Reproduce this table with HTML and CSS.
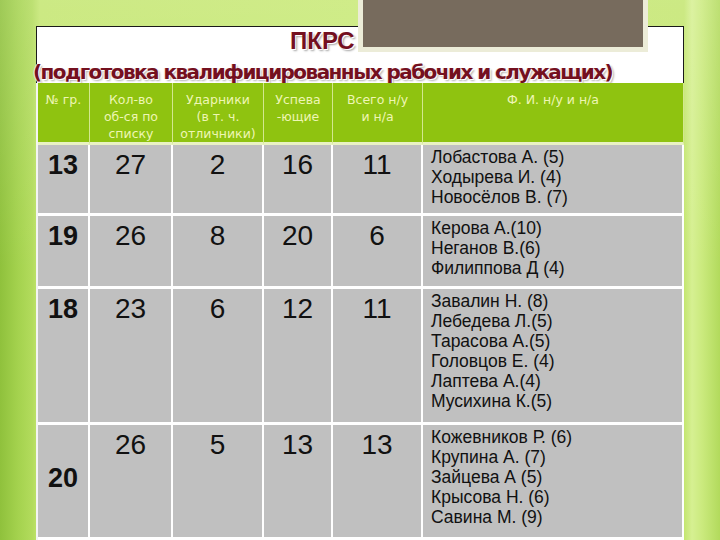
FILE: index.html
```html
<!DOCTYPE html>
<html lang="ru">
<head>
<meta charset="utf-8">
<title>ПКРС</title>
<link rel="stylesheet" href="styles.css">
</head>
<body>
<div class="slide">
  <div class="photo"></div>
  <div class="titlebox">
    <h1 class="title">ПКРС</h1>
    <p class="subtitle">(подготовка квалифицированных рабочих и служащих)</p>
  </div>
  <table class="grid">
    <thead>
      <tr class="head">
        <th class="c1">№ гр.</th>
        <th class="c2">Кол-во<br>об-ся по<br>списку</th>
        <th class="c3">Ударники<br>(в т. ч.<br>отличники)</th>
        <th class="c4">Успева<br>-ющие</th>
        <th class="c5">Всего н/у<br>и н/а</th>
        <th class="c6">Ф. И. н/у и н/а</th>
      </tr>
    </thead>
    <tbody>
      <tr class="r1">
        <td class="grp">13</td>
        <td class="num">27</td>
        <td class="num">2</td>
        <td class="num">16</td>
        <td class="num">11</td>
        <td class="names">Лобастова А. (5)<br>Ходырева И. (4)<br>Новосёлов В. (7)</td>
      </tr>
      <tr class="r2">
        <td class="grp">19</td>
        <td class="num">26</td>
        <td class="num">8</td>
        <td class="num">20</td>
        <td class="num">6</td>
        <td class="names">Керова А.(10)<br>Неганов В.(6)<br>Филиппова Д (4)</td>
      </tr>
      <tr class="r3">
        <td class="grp">18</td>
        <td class="num">23</td>
        <td class="num">6</td>
        <td class="num">12</td>
        <td class="num">11</td>
        <td class="names">Завалин Н. (8)<br>Лебедева Л.(5)<br>Тарасова А.(5)<br>Головцов Е. (4)<br>Лаптева А.(4)<br>Мусихина К.(5)</td>
      </tr>
      <tr class="r4">
        <td class="grp mid">20</td>
        <td class="num">26</td>
        <td class="num">5</td>
        <td class="num">13</td>
        <td class="num">13</td>
        <td class="names">Кожевников Р. (6)<br>Крупина А. (7)<br>Зайцева А (5)<br>Крысова Н. (6)<br>Савина М. (9)</td>
      </tr>
    </tbody>
  </table>
</div>
</body>
</html>
```

FILE: styles.css
```css
html, body {
  margin: 0;
  padding: 0;
}

body {
  width: 720px;
  height: 540px;
  overflow: hidden;
  font-family: "Liberation Sans", Arial, sans-serif;
  background:
    linear-gradient(to bottom, rgba(255,255,255,0.14), rgba(255,255,255,0) 50%),
    linear-gradient(to right, #8fc13c 0px, #a4d24e 18px, #b2db5c 32px, #c4e670 40px, #c8e976 360px, #c4e670 684px, #d6f092 692px, #cbea7e 702px, #b2da5c 720px);
}

.slide {
  position: relative;
  width: 720px;
  height: 540px;
  box-sizing: border-box;
  padding: 26px 36px 0 36px;
}

.photo {
  position: absolute;
  left: 358px;
  top: -5px;
  width: 280px;
  height: 47px;
  background: #776b5d;
  border: 5px solid #ececd8;
  z-index: 2;
}

.titlebox {
  box-sizing: border-box;
  height: 57px;
  background: #fff;
  border: 1px solid #1a1a1a;
  border-bottom: 0;
  position: relative;
  z-index: 1;
}

.title {
  margin: 0;
  padding-left: 253px;
  font-family: "Liberation Sans", Arial, sans-serif;
  font-weight: bold;
  font-size: 24px;
  line-height: 28px;
  color: #74101f;
  text-shadow: 1px 1px 0 #fff, 2px 2px 2px rgba(0, 0, 0, 0.35);
}

.subtitle {
  margin: 5px 0 0 -4px;
  white-space: nowrap;
  font-family: "DejaVu Sans", Verdana, sans-serif;
  font-weight: bold;
  font-size: 20px;
  letter-spacing: -1.55px;
  line-height: 25px;
  color: #74101f;
  text-shadow: 1px 1px 0 #fff, -1px 0 0 #f4e0e0, 2px 2px 2px rgba(0, 0, 0, 0.3);
}

.grid {
  position: relative;
  z-index: 1;
  width: 648px;
  table-layout: fixed;
  border-collapse: separate;
  border-spacing: 0;
  border-left: 2px solid #f4f4f4;
}

.grid th,
.grid td {
  box-sizing: border-box;
  padding: 0;
  vertical-align: top;
}

.c1 { width: 52px; }
.c2 { width: 83px; }
.c3 { width: 91px; }
.c4 { width: 69px; }
.c5 { width: 90px; }
.c6 { width: 261px; }

.head { height: 59px; }
.r1 { height: 71px; }
.r2 { height: 73px; }
.r3 { height: 136px; }
.r4 { height: 115px; }

.grid th {
  background: #8fc310;
  color: #eef6b4;
  font-family: "DejaVu Sans", Verdana, sans-serif;
  font-weight: normal;
  font-size: 12.5px;
  line-height: 17px;
  padding-top: 8px;
  text-align: center;
  border-right: 1px solid #d3e88e;
  border-bottom: 3px solid #e9f2c4;
}

.grid td {
  background: #c0c0c0;
  color: #111;
  border-right: 2px solid #fff;
  border-bottom: 3px solid #fff;
}

.grid .num {
  font-size: 28px;
  line-height: 30px;
  padding-top: 5px;
  text-align: center;
}

.grid .grp {
  font-size: 27px;
  font-weight: bold;
  line-height: 30px;
  padding-top: 5px;
  text-align: center;
}

.grid .grp.mid {
  vertical-align: middle;
  padding-top: 0;
  padding-bottom: 6px;
}

.grid .names {
  font-size: 17.5px;
  line-height: 20px;
  padding: 2px 4px 0 8px;
  text-align: left;
}
```
